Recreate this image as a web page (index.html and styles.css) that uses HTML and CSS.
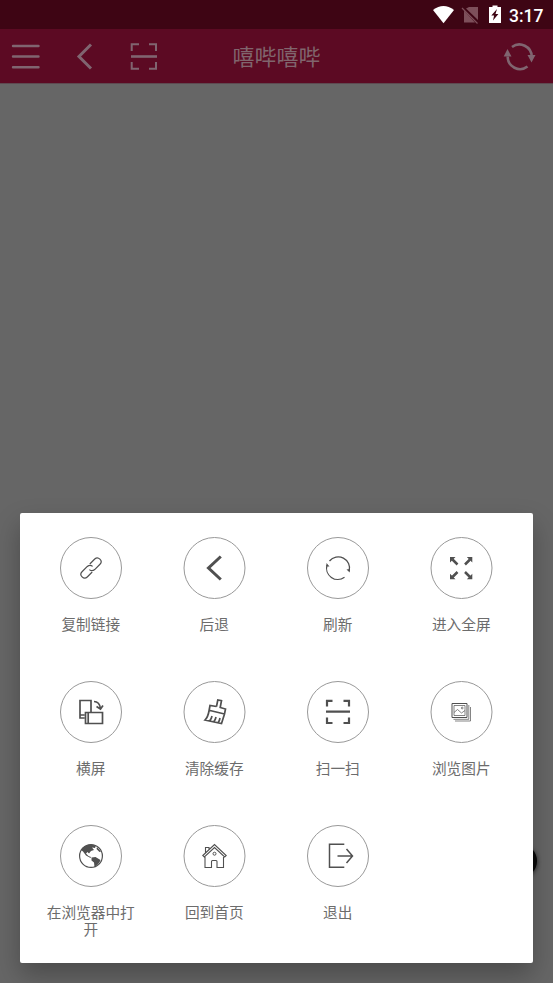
FILE: index.html
```html
<!DOCTYPE html>
<html lang="zh-CN">
<head>
<meta charset="utf-8">
<title>嘻哔嘻哔</title>
<link rel="stylesheet" href="styles.css">
</head>
<body>
<div class="screen">
  <div class="status">
    <svg class="status-icons" width="72" height="29" viewBox="0 0 72 29">
      <path fill="#fff" d="M0 10 Q10.500 2 21 10 L10.500 23.300Z"/>
      <path fill="#7d4f5a" d="M36 7H45V20L33 8.500ZM31 10.500L42 22.500H31Z"/>
      <path stroke="#7d4f5a" stroke-width="1.200" d="M29 8L44.500 23.500"/>
      <path fill="#fff" d="M59.500 5.500h5v1.500h3.500v16h-12v-16h3.500z"/>
      <path fill="#3e0514" d="M64 9L58.300 15.500H61.100L60 20.500L65.400 14H62.500Z"/>
    </svg>
    <span class="clock">3:17</span>
  </div>
  <header class="bar">
    <svg class="bar-left" width="170" height="54" viewBox="0 0 170 54" fill="none" stroke="#806570">
      <path stroke-width="2.400" stroke-linecap="round" d="M13 17H38.500M13 27.500H38.500M13 38.200H38.500"/>
      <path stroke-width="3" d="M91 15.500L79 27.500L91 39.500"/>
      <path stroke-width="2" d="M131.700 22V15.200H139M149 15.200H156V22M131.700 33V39.800H139M149 39.800H156V33"/>
      <path stroke-width="2.600" d="M131 27.500H157"/>
    </svg>
    <h1>嘻哔嘻哔</h1>
    <svg class="bar-right" width="34" height="54" viewBox="0 0 34 54" fill="none" stroke="#806570" stroke-width="2.600">
      <path d="M9 18A12.300 12.300 0 0 1 28.700 27.500M24.500 37.500A12.300 12.300 0 0 1 4.700 27.500"/>
      <path fill="#806570" stroke="none" d="M24.500 26H32.500L28.500 33.500ZM0.700 27.500H8.500L4.500 20Z"/>
    </svg>
  </header>
  <main class="page">
    <div class="fab"></div>
    <section class="dialog">
      <div class="item">
        <svg class="icon" viewBox="1 1 60 60"><g transform="rotate(-45 31 31)" stroke-width="1.200"><path d="M29 34.700H22Q18.400 34.700 18.400 31T22 27.300H29.500Q33 27.500 33.300 31"/><path d="M33 27.300H40Q43.600 27.300 43.600 31T40 34.700H32.500Q29 34.500 28.700 31"/></g></svg>
        <span>复制链接</span>
      </div>
      <div class="item">
        <svg class="icon" viewBox="1 1 60 60"><path stroke-width="3" d="M37.300 19.500L25 31L37.300 42.500"/></svg>
        <span>后退</span>
      </div>
      <div class="item">
        <svg class="icon" viewBox="1 1 60 60"><path stroke-width="1.300" d="M22.500 24A11.300 11.300 0 0 1 42.200 34M37.500 40.300A11.300 11.300 0 0 1 20 28"/><path class="solid" d="M39.500 32.500L43 32L42.700 35.500ZM19.500 26L22.500 29.500L19.300 29.500Z"/></svg>
        <span>刷新</span>
      </div>
      <div class="item">
        <svg class="icon" viewBox="1 1 60 60"><path stroke-width="2.500" d="M22 22.500L27 27.500M39.500 22.500L34.500 27.500M22 40L27 35M39.500 40L34.500 35"/><path class="solid" d="M19.500 20H25L19.500 25.500ZM41.800 20V25.500L36.300 20ZM19.500 42.300V36.800L25 42.300ZM41.800 42.300H36.300L41.800 36.800Z"/></svg>
        <span>进入全屏</span>
      </div>
      <div class="item">
        <svg class="icon" viewBox="1 1 60 60"><path stroke-width="1.700" d="M24.500 37H20V19.500H31V31M20 34H24.500M25.500 31.500H42.500V42.500H25.500ZM28.200 31.500V42.500"/><path stroke-width="1.700" d="M34 20.500Q39.500 20.500 40.500 27.500M36.500 25.500L40.500 28L43 24.500"/></svg>
        <span>横屏</span>
      </div>
      <div class="item">
        <svg class="icon" viewBox="1 1 60 60"><path stroke-width="1.700" d="M33 25.500L34.300 19L38 19.700L36.700 26.500L42 28L41 33L38 42.500L21.500 39Q24.500 36 25.500 30L26.500 24.500L33 25.500M26.500 29.500L41 33M28.500 35Q28 38 26 40M32.500 36Q32 39 30 41M36.500 37Q36 40 34.500 42"/></svg>
        <span>清除缓存</span>
      </div>
      <div class="item">
        <svg class="icon" viewBox="1 1 60 60"><path stroke-width="2.200" d="M20 25.500V19.800H25.500M36.500 19.800H42V25.500M20 36.500V42H25.500M36.500 42H42V36.500"/><path stroke-width="2.300" d="M19 30.700H43"/></svg>
        <span>扫一扫</span>
      </div>
      <div class="item">
        <svg class="icon" viewBox="1 1 60 60"><path stroke-width="1" d="M21.500 22.500H36.500V36.500H21.500Z"/><path stroke-width=".7" d="M23.500 24.500H34.500V34.500H23.500ZM23.500 31.500L27 28.500L31 32L34.500 29.500M38.300 24V38.300H23M40 26V40H24.500"/><circle cx="31.700" cy="27" r=".9" stroke-width=".7"/></svg>
        <span>浏览图片</span>
      </div>
      <div class="item">
        <svg class="icon" viewBox="1 1 60 60"><circle cx="31" cy="31" r="11.400" stroke-width="1.200"/><path class="solid" d="M21 25Q24 20 30 19.500L36 20.500L35 23L32 22.500L34 25L31 26L29 28.500L27.500 27L26 28.500L28.500 31L31 32L30.500 33L26 30.500L23 26.500ZM37 22L41 26.500L39.500 27L36.500 24ZM31.500 32.500L35.500 32L40.500 35Q39 39.500 34.500 42L34 37.500L31.500 35.500Z"/></svg>
        <span>在浏览器中打开</span>
      </div>
      <div class="item">
        <svg class="icon" viewBox="1 1 60 60"><path stroke-width="1.100" d="M21.500 32V42.500H28V36.500Q28 35.500 29 35.500H32.500Q33.500 35.500 33.500 36.500V42.500H40V32M19.300 30.500L31 19.500L42.700 30.500L41.200 32L31 22.500L20.800 32ZM22 27.500V22.500H25.500V24.500"/><circle cx="31" cy="28.700" r="1.500" stroke-width="1"/></svg>
        <span>回到首页</span>
      </div>
      <div class="item">
        <svg class="icon" viewBox="1 1 60 60"><path stroke-width="1.500" d="M37.300 19.200H22.500V42.200H37.300M30.500 31H45.500M39.500 24L45.500 31L39.500 38"/></svg>
        <span>退出</span>
      </div>
    </section>
  </main>
</div>
</body>
</html>
```
FILE: styles.css
```css
body {
  margin: 0;
  font-family: Roboto, "Noto Sans CJK SC", sans-serif;
}

.screen {
  display: flex;
  flex-direction: column;
  height: 983px;
  overflow: hidden;
  background: #666;
}

.status {
  display: flex;
  justify-content: flex-end;
  height: 29px;
  padding-right: 10px;
  background: #3e0514;
}

.clock {
  width: 34px;
  margin-left: 4px;
  color: #fff;
  font-size: 17.500px;
  font-weight: 500;
  line-height: 32px;
  text-align: right;
  white-space: nowrap;
}

.bar {
  display: grid;
  grid-template-columns: 1fr auto 1fr;
  height: 54px;
  background: #5c0a23;
  border-bottom: 1px solid #5e4a51;
}

.bar h1 {
  margin: 0;
  color: #80656d;
  font-size: 22px;
  font-weight: 400;
  line-height: 58px;
}

.bar-right {
  justify-self: end;
  margin-right: 16px;
}

.page {
  position: relative;
  flex: 1;
  padding: 428.500px 20px 20px;
}

.fab {
  position: absolute;
  top: 760px;
  right: 16px;
  width: 34px;
  height: 34px;
  border-radius: 50%;
  background: #080808;
  box-shadow: 0 1px 4px #222;
}

.dialog {
  position: relative;
  display: grid;
  grid-template-columns: repeat(4, 1fr);
  grid-auto-rows: 144px;
  box-sizing: border-box;
  height: 450.500px;
  padding: 24px 10px 0 9px;
  border-radius: 2px;
  background: #fff;
  box-shadow: 0 12px 26px rgba(0, 0, 0, .27);
}

.item {
  display: flex;
  flex-direction: column;
  align-items: center;
  color: #6c6c6c;
  font-size: 14.670px;
  line-height: 17.500px;
  text-align: center;
}

.item:nth-child(even) .icon {
  transform: translateX(.5px);
}

.item span {
  width: 94px;
  margin-top: 18px;
}

.icon {
  box-sizing: border-box;
  width: 62px;
  height: 62px;
  border: 1px solid #999;
  border-radius: 50%;
  fill: none;
  stroke: #505050;
}

.icon .solid {
  fill: #505050;
  stroke: none;
}
```
